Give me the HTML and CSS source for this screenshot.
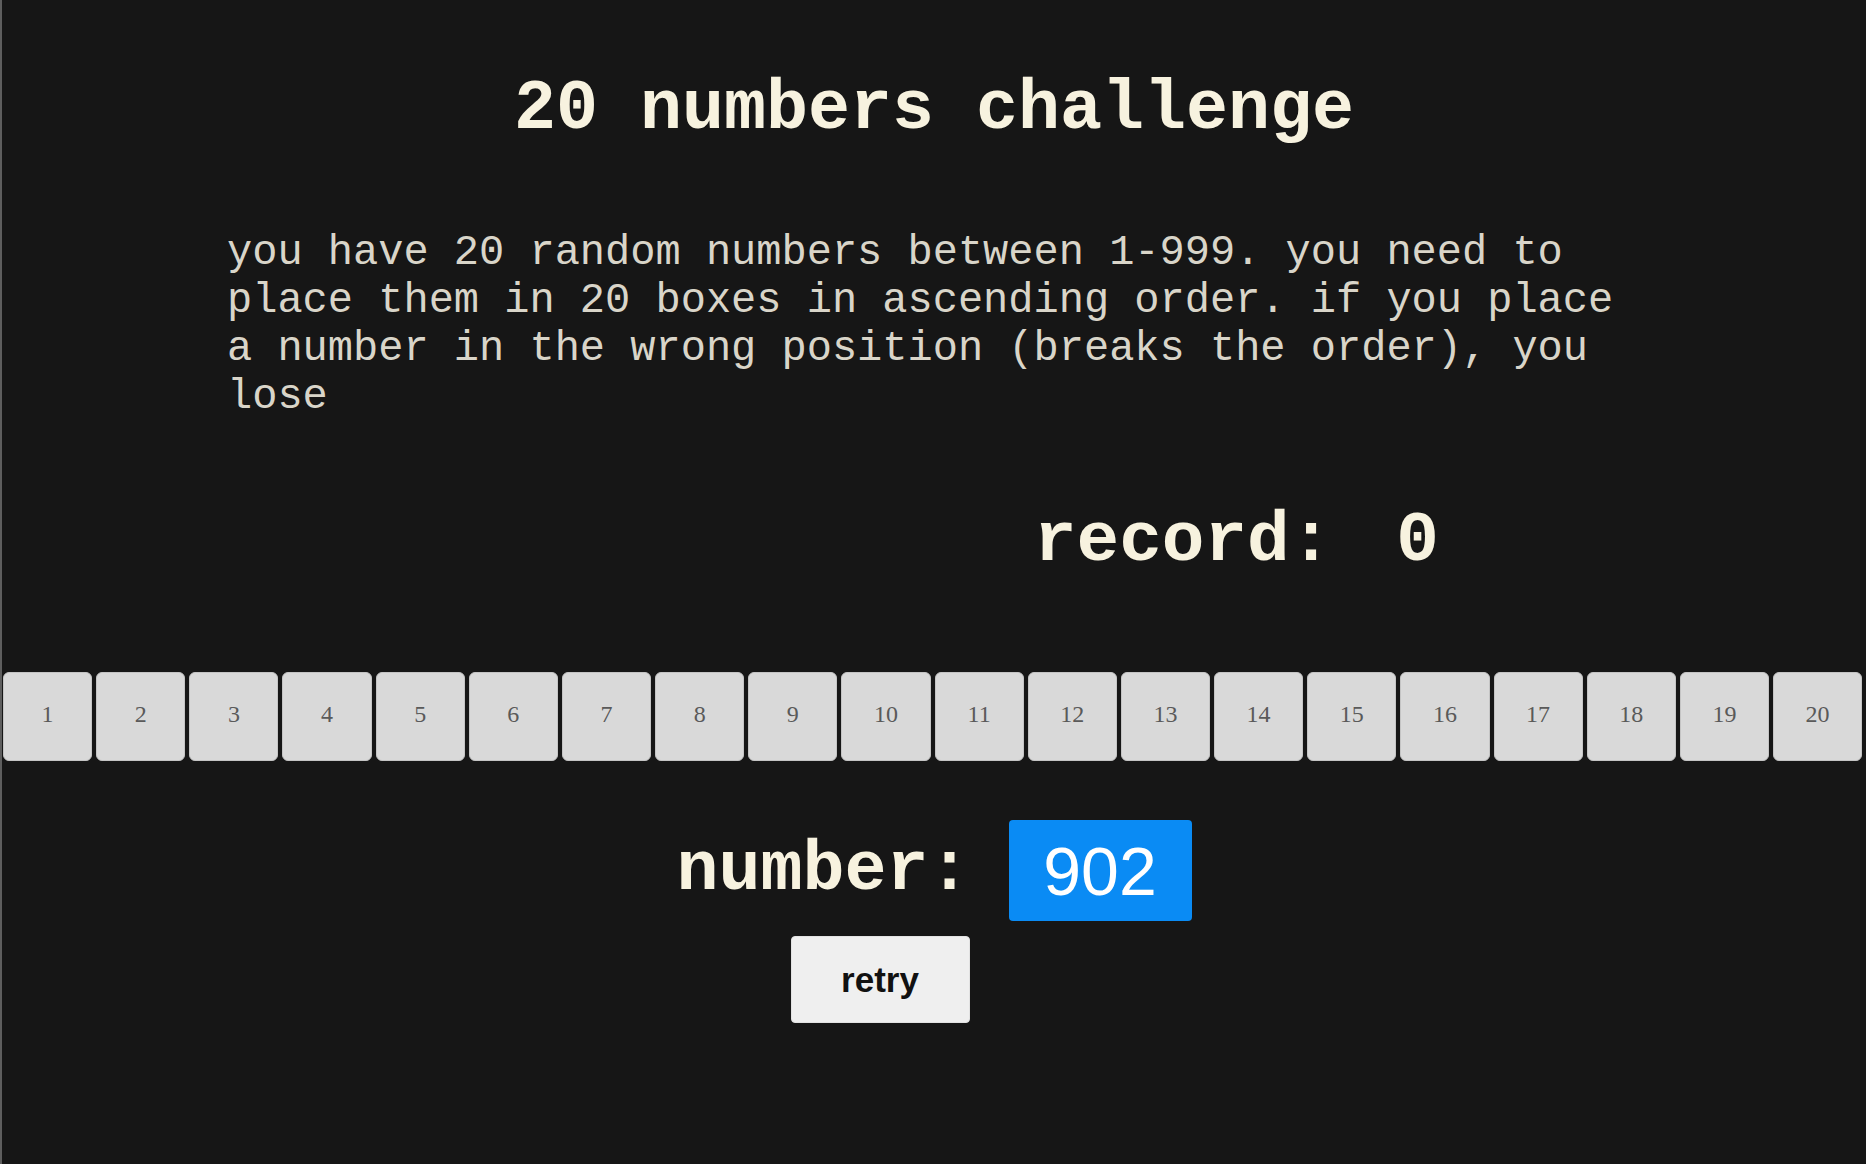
FILE: index.html
```html
<!DOCTYPE html>
<html lang="en">
<head>
  <meta charset="UTF-8">
  <meta name="viewport" content="width=device-width, initial-scale=1.0">
  <title>20 numbers challenge</title>
  <link rel="stylesheet" href="styles.css">
</head>
<body>
  <div class="page">

    <h1 class="title">20 numbers challenge</h1>

    <p class="rules">you have 20 random numbers between 1-999. you need to place them in 20 boxes in ascending order. if you place a number in the wrong position (breaks the order), you lose</p>

    <div class="record">record:<span id="record" class="record-value">0</span></div>

    <div class="boxes">
      <div class="box">1</div>
      <div class="box">2</div>
      <div class="box">3</div>
      <div class="box">4</div>
      <div class="box">5</div>
      <div class="box">6</div>
      <div class="box">7</div>
      <div class="box">8</div>
      <div class="box">9</div>
      <div class="box">10</div>
      <div class="box">11</div>
      <div class="box">12</div>
      <div class="box">13</div>
      <div class="box">14</div>
      <div class="box">15</div>
      <div class="box">16</div>
      <div class="box">17</div>
      <div class="box">18</div>
      <div class="box">19</div>
      <div class="box">20</div>
    </div>

    <div class="current">
      <span class="current-label">number:</span>
      <span id="number" class="current-value">902</span>
    </div>

    <div class="actions">
      <button id="retry" class="retry" type="button">retry</button>
    </div>

  </div>
</body>
</html>
```

FILE: styles.css
```css
* {
  box-sizing: border-box;
}

body {
  margin: 0;
  background-color: #161616;
}

.page {
  min-height: 100vh;
  border-left: 2px solid #5e5e5e;
  font-family: "Liberation Mono", "Courier New", monospace;
  color: #f7f2df;
}

.title {
  margin: 0;
  padding-top: 70px;
  font-size: 70px;
  font-weight: bold;
  line-height: normal;
  text-align: center;
}

.rules {
  width: 1414px;
  margin: 80px auto 0;
  font-size: 42px;
  line-height: normal;
  color: #d9d5c9;
}

.record {
  margin-top: 80px;
  padding-left: 1032px;
  font-size: 71px;
  font-weight: bold;
  line-height: normal;
}

.record-value {
  margin-left: 64px;
}

.boxes {
  display: flex;
  gap: 4px;
  margin-top: 91px;
  padding: 0 4px 0 1px;
}

.box {
  flex: 1;
  height: 89px;
  display: flex;
  align-items: center;
  justify-content: center;
  padding-bottom: 5px;
  background-color: #d9d9d9;
  border: 1px solid #c4c4c4;
  border-radius: 6px;
  font-family: "Liberation Serif", "Times New Roman", serif;
  font-size: 24px;
  color: #5a5a5a;
}

.current {
  display: flex;
  align-items: center;
  justify-content: center;
  gap: 38px;
  margin-top: 59px;
}

.current-label {
  font-size: 70px;
  font-weight: bold;
  line-height: normal;
}

.current-value {
  width: 183px;
  height: 101px;
  display: flex;
  align-items: center;
  justify-content: center;
  background-color: #0a8bf4;
  border-radius: 4px;
  font-family: "Liberation Sans", Arial, sans-serif;
  font-size: 68px;
  color: #ffffff;
}

.actions {
  display: flex;
  justify-content: center;
  margin-top: 15px;
  padding-right: 108px;
}

.retry {
  width: 179px;
  height: 87px;
  background-color: #efefef;
  border: 1px solid #e2e2e2;
  border-radius: 4px;
  font-family: "Liberation Sans", Arial, sans-serif;
  font-size: 35px;
  font-weight: bold;
  color: #111111;
}
```
